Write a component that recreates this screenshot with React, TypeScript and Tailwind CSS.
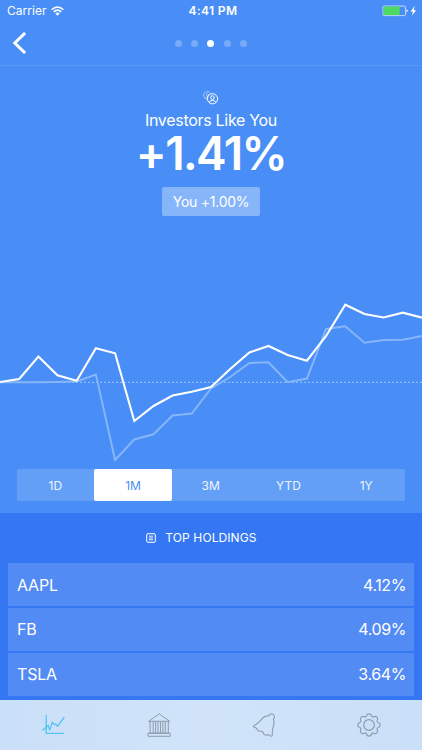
import React, { useState } from 'react';
import clsx from 'clsx';

const RANGES = ['1D', '1M', '3M', 'YTD', '1Y'];

const HOLDINGS = [
  { symbol: 'AAPL', weight: '4.12%' },
  { symbol: 'FB', weight: '4.09%' },
  { symbol: 'TSLA', weight: '3.64%' },
];

const BASELINE = 112.3;
const INVESTORS = [112, 109, 86.5, 105.3, 110.8, 78.3, 83.3, 151, 136, 125.5, 121.7, 117, 99, 82.5, 76, 85, 90.7, 66, 34.7, 44, 47.5, 42.7, 47.7];
const YOU = [112.3, 112.3, 112.3, 111.9, 111.5, 104.5, 190, 169.5, 164.3, 145.5, 143.5, 118.5, 107, 93, 92.3, 112.2, 108.5, 59, 56.3, 72.8, 70, 69.7, 66];

const toPoints = (values: number[]) =>
  values.map((y, i) => `${((i * 422) / (values.length - 1)).toFixed(1)},${y}`).join(' ');

// Eight rounded lobes joined by small inward curves
const gearPath = () => {
  const at = (deg: number, r: number) => {
    const a = (deg * Math.PI) / 180;
    return `${(13 + Math.cos(a) * r).toFixed(2)} ${(13 + Math.sin(a) * r).toFixed(2)}`;
  };
  let d = `M${at(-15, 9.6)}`;
  for (let i = 0; i < 8; i++) {
    d += `A2.55 2.4 ${i * 45 + 90} 0 1 ${at(i * 45 + 15, 9.6)}A1.5 1.5 0 0 0 ${at(i * 45 + 30, 9.6)}`;
  }
  return `${d}Z`;
};

const StatusBar: React.FC = () => (
  <div className="grid h-[22px] shrink-0 grid-cols-3 items-center px-[5px] text-[12px] leading-none">
    <div className="flex items-center gap-[5px] pl-0.5">
      <span className="tracking-[0.05px]">Carrier</span>
      <svg width="13" height="10" viewBox="0 0 13 10" fill="none" stroke="white" strokeWidth="1.5" className="-ml-px -mt-px">
        <path d="M.6 3.7Q6.5-1.8 12.4 3.7" />
        <path d="M2.7 5.9Q6.5 2.3 10.3 5.9" />
        <path d="M6.5 9.7 4.3 7.4Q6.5 5.5 8.7 7.4Z" fill="white" stroke="none" />
      </svg>
    </div>
    <span className="pl-1 text-center font-semibold tracking-[0.35px]">4:41 PM</span>
    <svg className="justify-self-end" width="35" height="12" viewBox="0 0 35 12">
      <rect x="1" y="1" width="22.5" height="9.6" rx="1.2" fill="none" stroke="white" strokeOpacity=".65" />
      <rect x="1.5" y="1.5" width="16.2" height="8.6" fill="#4cd964" />
      <path d="M24.4 4.2q1.5.3 1.5 1.6t-1.5 1.6z" fill="white" fillOpacity=".8" />
      <path d="M32.7 1 28.5 6.4h2.4l-1 4.2 4.3-5.4h-2.4z" fill="white" />
    </svg>
  </div>
);

const NavBar: React.FC = () => (
  <div className="grid h-11 shrink-0 grid-cols-3 items-center border-b border-white/10 px-3 pb-px">
    <svg width="15" height="22" viewBox="0 0 15 22" fill="none" stroke="white" strokeWidth="3">
      <path d="M13.1 1 2.8 11 13.1 21" />
    </svg>
    <div className="flex justify-center gap-[9.2px]">
      {[0, 1, 2, 3, 4].map((dot) => (
        <span key={dot} className={clsx('size-[7px] rounded-full', dot === 2 ? 'bg-white' : 'bg-white/25')} />
      ))}
    </div>
  </div>
);

const InvestorsIcon: React.FC = () => (
  <svg width="16" height="14" viewBox="0 0 16 14" fill="none" stroke="white" strokeWidth="1">
    <g opacity=".5">
      <path d="M4.4 8.1A3.8 3.8 0 1 1 7.7 2.5" />
      <circle cx="4.4" cy="3.7" r="1.1" />
      <path d="M2.5 6.8q.8-1.6 2.5-1.3" />
    </g>
    <circle cx="9.5" cy="7.8" r="5.1" />
    <circle cx="9.5" cy="6.6" r="1.8" />
    <path d="M6.3 11.4q.4-2 3.2-2t3.2 2" />
  </svg>
);

const PerformanceChart: React.FC = () => (
  <svg width="422" height="199" viewBox="0 0 422 199" fill="none" className="block shrink-0">
    <line x1="0" x2="422" y1={BASELINE} y2={BASELINE} stroke="white" strokeOpacity=".5" strokeWidth="1" strokeDasharray="2 2" />
    <polyline points={toPoints(YOU)} stroke="#86b5fa" strokeWidth="2" />
    <polyline points={toPoints(INVESTORS)} stroke="white" strokeWidth="2.1" />
  </svg>
);

const TabBar: React.FC = () => (
  <nav className="grid h-[50px] shrink-0 grid-cols-4 place-items-center bg-linear-to-r from-[#cae0f8] via-[#d0e3f9] to-[#cae0f8] text-[#8f9dab]">
    <button aria-label="Performance">
      <svg width="26" height="26" viewBox="0 0 26 26" fill="none" stroke="#54c5f3" strokeWidth="1.3" strokeLinecap="round" strokeLinejoin="round">
        <path d="M6.2 3.5v17.8H23.4" />
        <path d="M3 18.1 8.1 13.5 9.8 18.1 12.3 10 14 12.5 16.1 12.2 17.6 14.4 24 5.5" />
      </svg>
    </button>
    <button aria-label="Accounts" className="pl-px">
      <svg width="26" height="26" viewBox="0 0 26 26" fill="none" stroke="currentColor" strokeWidth="1" strokeLinejoin="round">
        <path d="M2.6 9.3 13.2 1.8 23.7 9.3Z" />
        <path d="M4.1 9.3v12M7.2 9.3v12M9.6 9.3v12M12 9.3v12M14.5 9.3v12M16.9 9.3v12M19.3 9.3v12M22.3 9.3v12" />
        <path d="M3.5 21.2h19.2M2 21.2h22.2v3.1H2z" />
      </svg>
    </button>
    <button aria-label="Alerts">
      <svg width="26" height="26" viewBox="0 0 26 26" fill="none" stroke="currentColor" strokeWidth="1.1" strokeLinejoin="round">
        <path d="M2.3 14.2C7 11.7 9.2 9.1 11 6.8c2-2.6 4.8-3.2 6.9-3.1.6-1.6 2.3-2.2 3.8-1.5 1.7.8 2.2 2.7 1.3 4.2l-.7.7c1.4 3 .8 5.3-.2 8.2-.7 2.2-.8 5.5-.9 8.1-.1 1-1 .9-1.7.5l-2.1-1.3c-1.7.9-2.6.8-4.1-.1-1-.7-1.3-1.4-1.2-2.5l-2-.6c-1.4-.2-2.3-.2-3.1-.8-1.1-.9-.8-2-2-2.6-.8-.5-2.7-.7-2.7-1.8Z" />
      </svg>
    </button>
    <button aria-label="Settings">
      <svg width="26" height="26" viewBox="0 0 26 26" fill="none" stroke="currentColor" strokeWidth="1.2">
        <path d={gearPath()} />
        <circle cx="13" cy="13" r="5.3" />
      </svg>
    </button>
  </nav>
);

export default function App() {
  const [range, setRange] = useState('1M');

  return (
    <div className="flex h-[750px] w-[422px] flex-col overflow-hidden bg-[#488ef6] font-['Inter',sans-serif] text-white">
      <StatusBar />
      <NavBar />

      <div className="flex h-[204px] shrink-0 flex-col items-center pt-[25px]">
        <InvestorsIcon />
        <h1 className="mt-[5px] text-[16px] leading-5 -tracking-[0.3px]">Investors Like You</h1>
        <div className="text-[46px] font-semibold leading-[46px] -tracking-[1.6px]">+1.41%</div>
        <div className="mt-[11px] flex h-[29px] w-[98px] items-center justify-center rounded-[2px] bg-white/35 text-[14px] -tracking-[0.25px]">
          You +1.00%
        </div>
      </div>

      <PerformanceChart />

      <div className="ml-[16.5px] mr-[17px] grid h-8 shrink-0 grid-cols-5 rounded-[2px] bg-white/15">
        {RANGES.map((item) => (
          <button
            key={item}
            onClick={() => setRange(item)}
            className={clsx('rounded-[2px] pt-px text-[12px]', range === item ? 'bg-white text-[#488ef6]' : 'text-white/90')}
          >
            {item}
          </button>
        ))}
      </div>

      <section className="mt-3 flex-1 bg-[#3577f3] px-2">
        <div className="flex h-[50px] items-center justify-center gap-[9px] pr-[19px]">
          <svg width="10" height="10" viewBox="0 0 10 10" fill="none" stroke="white" strokeWidth="1">
            <rect x=".7" y=".7" width="8.6" height="8.6" rx="1.3" />
            <path d="M3 3.2h4M3 5h4M3 6.8h4" strokeWidth=".9" />
          </svg>
          <h2 className="text-[12px] tracking-[0.1px]">TOP HOLDINGS</h2>
        </div>
        <div className="flex flex-col gap-[1.8px]">
          {HOLDINGS.map((holding) => (
            <div key={holding.symbol} className="flex h-[43px] items-center justify-between bg-white/15 pl-[9px] pr-2 text-[16px]">
              <span className="-tracking-[0.2px]">{holding.symbol}</span>
              <span className="-tracking-[0.4px]">{holding.weight}</span>
            </div>
          ))}
        </div>
      </section>

      <TabBar />
    </div>
  );
}
